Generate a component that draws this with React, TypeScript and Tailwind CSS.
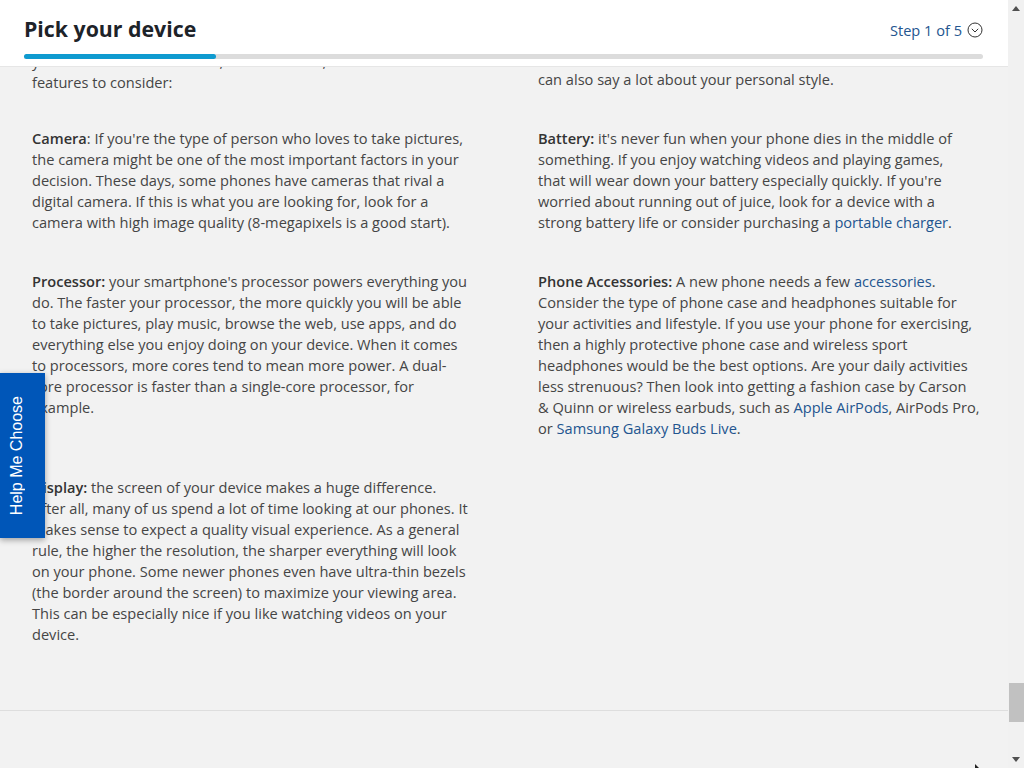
const font = { fontFamily: '"Open Sans", "Noto Sans", sans-serif' };

function A({ children }: { children: React.ReactNode }) {
  return <a className="text-[#23558f]">{children}</a>;
}

export default function App() {
  return (
    <div className="flex h-[768px] w-[1024px] overflow-hidden bg-[#f2f2f2] text-[14.6px] leading-[21px] text-[#454545]" style={font}>
      <div className="relative h-full w-[1008px] overflow-hidden">
        {/* sticky step header */}
        <header className="absolute inset-x-0 top-0 z-10 h-[67px] border-b border-[#e6e6e6] bg-white pl-6 pr-[25px]">
          <div className="flex h-[54px] items-start justify-between">
            <h1 className="mt-[14px] text-[21.3px] font-bold leading-[30px] text-[#1d2329]">Pick your device</h1>
            <div className="mt-[20px] flex items-start gap-[5px] text-[14.6px] leading-[21px] text-[#23558f]">
              <span>Step 1 of 5</span>
              <svg className="mt-[2px]" width="16" height="16" viewBox="0 0 16 16" fill="none" stroke="#333" strokeWidth="1">
                <circle cx="8" cy="8" r="7" />
                <path d="M4.8 6.8 8 10l3.2-3.2" />
              </svg>
            </div>
          </div>
          <div className="h-[5px] rounded-full bg-[#dcdcdc]">
            <div className="h-[5px] w-[192px] rounded-full bg-[#0f9bd0]" />
          </div>
        </header>

        <button className="absolute left-0 top-[373px] z-10 flex h-[165px] w-[45px] items-center justify-start bg-[#0056b8] pl-[7px] shadow-[0_2px_6px_rgba(0,0,0,0.35)]">
          <span className="rotate-180 whitespace-nowrap text-[16px] leading-[19px] text-white [writing-mode:vertical-rl]" style={{ fontFamily: '"Liberation Sans", sans-serif' }}>
            Help Me Choose
          </span>
        </button>

        <main className="grid h-[711px] grid-cols-[506px_1fr] border-b border-[#dedede] pl-8 pt-[50px]">
          <section className="whitespace-nowrap">
            <p className="mt-px">
              you will also want to look at, and then rank, the main
              <br />
              features to consider:
            </p>
            <p className="mt-[35px]">
              <b className="font-semibold text-[#333]">Camera</b>: If you're the type of person who loves to take pictures,
              <br />
              the camera might be one of the most important factors in your
              <br />
              decision. These days, some phones have cameras that rival a
              <br />
              digital camera. If this is what you are looking for, look for a
              <br />
              camera with high image quality (8-megapixels is a good start).
            </p>
            <p className="mt-[38px]">
              <b className="font-semibold text-[#333]">Processor:</b> your smartphone's processor powers everything you
              <br />
              do. The faster your processor, the more quickly you will be able
              <br />
              to take pictures, play music, browse the web, use apps, and do
              <br />
              everything else you enjoy doing on your device. When it comes
              <br />
              to processors, more cores tend to mean more power. A dual-
              <br />
              core processor is faster than a single-core processor, for
              <br />
              example.
            </p>
            <p className="mt-[59px]">
              <b className="font-semibold text-[#333]">Display:</b> the screen of your device makes a huge difference.
              <br />
              After all, many of us spend a lot of time looking at our phones. It
              <br />
              makes sense to expect a quality visual experience. As a general
              <br />
              rule, the higher the resolution, the sharper everything will look
              <br />
              on your phone. Some newer phones even have ultra-thin bezels
              <br />
              (the border around the screen) to maximize your viewing area.
              <br />
              This can be especially nice if you like watching videos on your
              <br />
              device.
            </p>
          </section>
          <section className="whitespace-nowrap">
            <p className="-mt-[2px]">
              <br />
              can also say a lot about your personal style.
            </p>
            <p className="mt-[38px]">
              <b className="font-semibold text-[#333]">Battery:</b> it's never fun when your phone dies in the middle of
              <br />
              something. If you enjoy watching videos and playing games,
              <br />
              that will wear down your battery especially quickly. If you're
              <br />
              worried about running out of juice, look for a device with a
              <br />
              strong battery life or consider purchasing a <A>portable charger</A>.
            </p>
            <p className="mt-[38px]">
              <b className="font-semibold text-[#333]">Phone Accessories:</b> A new phone needs a few <A>accessories</A>.
              <br />
              Consider the type of phone case and headphones suitable for
              <br />
              your activities and lifestyle. If you use your phone for exercising,
              <br />
              then a highly protective phone case and wireless sport
              <br />
              headphones would be the best options. Are your daily activities
              <br />
              less strenuous? Then look into getting a fashion case by Carson
              <br />
              &amp; Quinn or wireless earbuds, such as <A>Apple AirPods</A>, AirPods Pro,
              <br />
              or <A>Samsung Galaxy Buds Live</A>.
            </p>
          </section>
        </main>
        <svg className="absolute left-[973px] top-[764px]" width="8" height="4" viewBox="0 0 8 4">
          <path d="M2 0l4 4H2z" fill="#222" />
        </svg>
      </div>

      {/* browser scrollbar */}
      <div className="flex w-4 flex-col items-center bg-[#f1f1f1]">
        <svg className="mt-[6px]" width="8" height="5" viewBox="0 0 8 5"><path d="M4 0l4 5H0z" fill="#505050" /></svg>
        <div className="mt-[672px] h-[39px] w-[15px] bg-[#c1c1c1]" />
        <svg className="mt-[35px]" width="8" height="5" viewBox="0 0 8 5"><path d="M0 0h8L4 5z" fill="#505050" /></svg>
      </div>
    </div>
  );
}
